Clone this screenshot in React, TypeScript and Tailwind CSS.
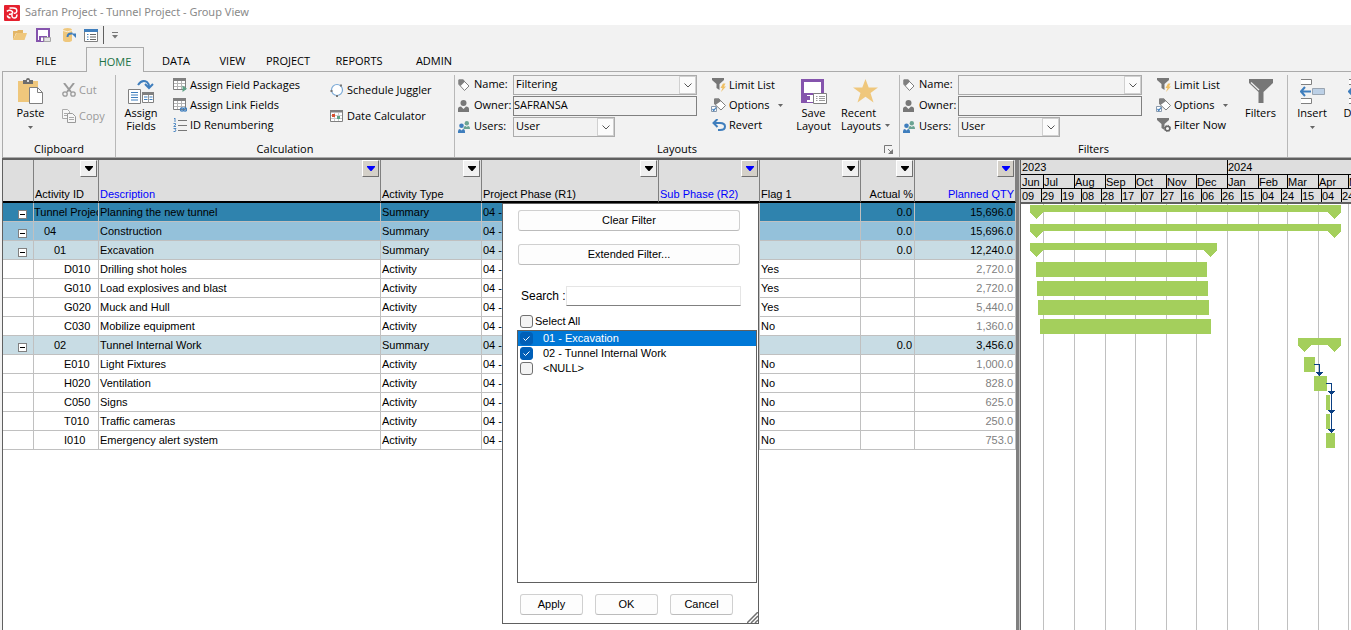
import type { ReactNode } from 'react';

const TABS = [
  { label: 'FILE', width: 'w-20' },
  { label: 'HOME', width: 'w-[58px]' },
  { label: 'DATA', width: 'w-16' },
  { label: 'VIEW', width: 'w-[49px]' },
  { label: 'PROJECT', width: 'w-[62px]' },
  { label: 'REPORTS', width: 'w-20' },
  { label: 'ADMIN', width: 'w-[70px]' },
];

const COLUMNS = [
  { title: '', width: 'w-[31px]' },
  { title: 'Activity ID', width: 'w-[65px]' },
  { title: 'Description', width: 'w-[282px]', filtered: true },
  { title: 'Activity Type', width: 'w-[101px]' },
  { title: 'Project Phase (R1)', width: 'w-[177px]' },
  { title: 'Sub Phase (R2)', width: 'w-[101px]', filtered: true },
  { title: 'Flag 1', width: 'w-[101px]' },
  { title: 'Actual %', width: 'w-[54px]', right: true },
  { title: 'Planned QTY', width: 'w-[101px]', filtered: true, right: true },
];

// start / end are days from the left edge of the timeline, one pixel per day
const ROWS = [
  { level: 0, id: 'Tunnel Project', name: 'Planning the new tunnel', qty: '15,696.0', start: 9, end: 320 },
  { level: 1, id: '04', name: 'Construction', qty: '15,696.0', start: 9, end: 320 },
  { level: 2, id: '01', name: 'Excavation', qty: '12,240.0', start: 9, end: 196 },
  { level: 3, id: 'D010', name: 'Drilling shot holes', flag: 'Yes', qty: '2,720.0', start: 15, end: 186 },
  { level: 3, id: 'G010', name: 'Load explosives and blast', flag: 'Yes', qty: '2,720.0', start: 16, end: 187 },
  { level: 3, id: 'G020', name: 'Muck and Hull', flag: 'Yes', qty: '5,440.0', start: 17, end: 188 },
  { level: 3, id: 'C030', name: 'Mobilize equipment', flag: 'No', qty: '1,360.0', start: 19, end: 190 },
  { level: 2, id: '02', name: 'Tunnel Internal Work', qty: '3,456.0', start: 277, end: 320 },
  { level: 3, id: 'E010', name: 'Light Fixtures', flag: 'No', qty: '1,000.0', start: 283, end: 294 },
  { level: 3, id: 'H020', name: 'Ventilation', flag: 'No', qty: '828.0', start: 293, end: 306 },
  { level: 3, id: 'C050', name: 'Signs', flag: 'No', qty: '625.0', start: 305, end: 309 },
  { level: 3, id: 'T010', name: 'Traffic cameras', flag: 'No', qty: '250.0', start: 305, end: 309 },
  { level: 3, id: 'I010', name: 'Emergency alert system', flag: 'No', qty: '753.0', start: 305, end: 314 },
];

const LEVEL_BG = ['bg-[#2f83ae]', 'bg-[#94c1da]', 'bg-[#c8dce4]', 'bg-white'];
const LEVEL_INDENT = ['pl-0', 'pl-[10px]', 'pl-5', 'pl-[30px]'];

const MONTHS = [
  { name: 'Jun', days: 22 },
  { name: 'Jul', days: 31 },
  { name: 'Aug', days: 31 },
  { name: 'Sep', days: 30 },
  { name: 'Oct', days: 31 },
  { name: 'Nov', days: 30 },
  { name: 'Dec', days: 31 },
  { name: 'Jan', days: 31 },
  { name: 'Feb', days: 29 },
  { name: 'Mar', days: 31 },
  { name: 'Apr', days: 30 },
  { name: 'M', days: 31 },
];
const DATES = ['09', '29', '19', '08', '28', '17', '07', '27', '16', '06', '26', '15', '04', '24', '15', '04', '24'];

/* ---------- icons ---------- */

function Svg({ w, h = w, children }: { w: number; h?: number; children: ReactNode }) {
  return (
    <svg width={w} height={h} viewBox={`0 0 ${w} ${h}`} fill="none" aria-hidden="true" className="shrink-0">
      {children}
    </svg>
  );
}

function LogoIcon() {
  return (
    <Svg w={16}>
      <rect width="16" height="16" rx="1" fill="#e5202e" />
      <path d="M5.500 3H9q3.800 0 3.800 2.700T9.800 8.300" stroke="#fff" strokeWidth="1.500" />
      <path d="M2.800 6.300Q5.500 4.500 7.500 5.800t.5 2.700-3 .5" stroke="#fff" strokeWidth="1.500" />
      <path d="M3.300 10.500Q4 13 6.500 12.800M8 9q-.5 4 2.200 4T13 9.500" stroke="#fff" strokeWidth="1.500" />
    </Svg>
  );
}

function FolderIcon() {
  return (
    <Svg w={14} h={12}>
      <path d="M0 11V2h4l1-1h5v3H3z" fill="#e3b565" />
      <path d="M3.500 4H14l-2.500 7H0z" fill="#efc77c" />
    </Svg>
  );
}

function DiskIcon() {
  return (
    <Svg w={15} h={14}>
      <path d="M1 1h12v12H1z" fill="#fff" stroke="#8554ad" strokeWidth="2" />
      <path d="M3 8h8v5H3z" fill="#8554ad" />
      <path d="M5 9.500h2V13H5z" fill="#fff" />
      <path d="M8 9.500h6.500v4H8z" fill="#e4e4e4" stroke="#a6a6a6" />
    </Svg>
  );
}

function DatabaseIcon() {
  return (
    <Svg w={13} h={14}>
      <path d="M0 2q0-2 4.500-2T9 2v10q0 2-4.500 2T0 12z" fill="#efc77c" />
      <path d="M0 2.500q4.500 2.500 9 0" stroke="#fff" strokeWidth=".7" />
      <path d="M4.500 9q0-4 5-3.500" stroke="#3f7ebd" strokeWidth="2" />
      <path d="M8.500 5.500H13v4.500z" fill="#3f7ebd" />
    </Svg>
  );
}

function ListIcon() {
  return (
    <Svg w={14} h={13}>
      <path d="M.5.5h13v12H.5z" fill="#fff" stroke="#808080" />
      <path d="M0 0h14v3H0z" fill="#3f7ebd" />
      <path d="M3 5.500h1.500M3 8h1.500M3 10.500h1.500" stroke="#3f7ebd" />
      <path d="M6 5.500h6M6 8h6M6 10.500h6" stroke="#666" />
    </Svg>
  );
}

function PasteIcon() {
  return (
    <Svg w={26}>
      <path d="M0 3h20v21H0z" fill="#efc77c" />
      <path d="M5 2h3q0-2 2-2t2 2h3v4H5z" fill="#6d6d6d" />
      <path d="M9 2h2v2H9z" fill="#ddd" />
      <path d="M11.500 9.500h8l5 5v11h-13z" fill="#fff" stroke="#808080" />
      <path d="M19.500 9.500v5h5" stroke="#808080" />
    </Svg>
  );
}

function CutIcon() {
  return (
    <Svg w={14}>
      <path d="M2 0l7 9M12 0L5 9" stroke="#9a9a9a" strokeWidth="2" />
      <circle cx="3" cy="11" r="2.200" stroke="#9a9a9a" strokeWidth="1.300" />
      <circle cx="11" cy="11" r="2.200" stroke="#9a9a9a" strokeWidth="1.300" />
    </Svg>
  );
}

function CopyIcon() {
  return (
    <Svg w={14}>
      <path d="M.5.5h5l2 2v7h-7z" fill="#f7f7f7" stroke="#aaa" />
      <path d="M2 4.500h3M2 6.500h3" stroke="#aaa" />
      <path d="M5.500 4.500h5l3 3v6h-8z" fill="#f7f7f7" stroke="#9a9a9a" />
      <path d="M7 8.500h5M7 10.500h5" stroke="#aaa" />
    </Svg>
  );
}

function AssignFieldsIcon() {
  return (
    <Svg w={26} h={25}>
      <path d="M10 6Q14 0 19 3q2 1.500 2 5" stroke="#3f7ebd" strokeWidth="2" />
      <path d="M17 5L21 9l4-4" stroke="#3f7ebd" strokeWidth="2" />
      <path d="M.5 10.500h12v14H.5z" fill="#fff" stroke="#808080" />
      <path d="M3 13.500h7M3 16h7M3 18.500h7M3 21h7" stroke="#3f7ebd" />
      <path d="M14.500 14.500h11v9h-11z" fill="#fff" stroke="#808080" />
      <path d="M14 13h12v3H14z" fill="#808080" />
      <path d="M16 18h3.500M21.500 18h3M16 20.500h3.500M21.500 20.500h3" stroke="#3f7ebd" />
      <path d="M20.500 16v8" stroke="#999" />
    </Svg>
  );
}

function GridIcon({ link }: { link?: boolean }) {
  return (
    <Svg w={14}>
      <path d="M.5.5h12v11H.5z" fill="#fff" stroke="#808080" />
      <path d="M0 0h13v3H0z" fill="#808080" />
      <path d="M1 5.500h11M1 8.500h11M4.500 3v8M8.500 3v8" stroke="#b5b5b5" />
      {link ? (
        <>
          <circle cx="9" cy="11.500" r="1.600" stroke="#3f7ebd" strokeWidth="1.300" />
          <circle cx="12" cy="11.500" r="1.600" stroke="#3f7ebd" strokeWidth="1.300" />
        </>
      ) : (
        <path d="M9.500 7.500l4.500 3.200-4.500 3.300z" fill="#5fa286" />
      )}
    </Svg>
  );
}

function NumberedIcon() {
  return (
    <Svg w={14}>
      <path d="M5 2.500h9M5 7.500h9M5 12.500h9" stroke="#777" />
      <path d="M1 1l1-1v4M.5 5.500h2v1.500L.7 8.500H3M.5 10.500H3l-1 1.300 1 .7-.7 1H.5" stroke="#3f7ebd" strokeWidth=".9" />
    </Svg>
  );
}

function JugglerIcon() {
  return (
    <Svg w={14}>
      <circle cx="7" cy="7" r="5.500" fill="#fff" stroke="#7aa9d6" strokeWidth="1.200" />
      <path d="M10 1.500h2v2h-2zM.5 7h2v2h-2zM6 12h2v2H6z" fill="#777" />
    </Svg>
  );
}

function CalendarIcon() {
  return (
    <Svg w={13} h={12}>
      <path d="M.5.5h12v11H.5z" fill="#fff" stroke="#808080" />
      <path d="M0 0h13v2.500H0z" fill="#808080" />
      <path d="M1 5.500h11M1 8.500h11M4.500 3v8M8.500 3v8" stroke="#ccc" />
      <path d="M2 4h3v3H2z" fill="#d9502e" />
      <path d="M7 6h3v3H7z" fill="#5fa286" />
    </Svg>
  );
}

function TagIcon() {
  return (
    <Svg w={12}>
      <path d="M1 1h4l6 6-4.500 4.500L1 5.500z" fill="#fff" stroke="#808080" />
      <path d="M.5.500h5L7 2.500 2.500 7 .5 5z" fill="#808080" />
    </Svg>
  );
}

function PersonIcon() {
  return (
    <Svg w={11} h={12}>
      <circle cx="5.500" cy="3" r="3" fill="#777" />
      <path d="M0 12V9q0-2.500 3-2.500L5.500 9 8 6.500q3 0 3 2.500v3z" fill="#777" />
    </Svg>
  );
}

function PeopleIcon() {
  return (
    <Svg w={12}>
      <circle cx="8.800" cy="2.200" r="2.200" fill="#6ba493" />
      <path d="M5.500 8q0-3 2-3l1.300 1 1.200-1q2 0 2 3z" fill="#6ba493" />
      <circle cx="3.500" cy="4.700" r="2.300" fill="#3f7ebd" />
      <path d="M0 12q-.3-4 2-4l1.500 1.500L5 8q2.300 0 2 4z" fill="#3f7ebd" />
    </Svg>
  );
}

function FunnelIcon({ badge }: { badge: 'bolt' | 'gear' }) {
  return (
    <Svg w={14}>
      <path d="M0 0h12v2L7.500 6v6L4.500 10V6L0 2z" fill="#777" />
      {badge === 'bolt' ? (
        <path d="M11 5.500L8.500 10h2L9 14l5-5.500h-2L13.500 5.500z" fill="#efc066" />
      ) : (
        <>
          <circle cx="10.500" cy="10.500" r="2.300" fill="#f3f3f3" stroke="#666" strokeWidth="1.500" />
          <circle cx="10.500" cy="10.500" r="3.200" stroke="#666" strokeWidth="1" strokeDasharray="1.200 1.300" />
        </>
      )}
    </Svg>
  );
}

function OptionsIcon() {
  return (
    <Svg w={15} h={14}>
      <path d="M4 1h4l6.500 6.500L10 12 4 6.500z" fill="#fff" stroke="#808080" />
      <path d="M3 .5h5L10 3 4.500 7 3 5.500z" fill="#808080" />
      <path d="M.5 8.500h5v5h-5z" fill="#fff" stroke="#8a9aad" />
      <path d="M1.500 11l1.300 1.500L5 9.500" stroke="#3f7ebd" strokeWidth="1.200" />
    </Svg>
  );
}

function RevertIcon() {
  return (
    <Svg w={14} h={12}>
      <path d="M5.500 0L1.500 4l4 4M2 4h6q5 0 5 3.500T8 11H6" stroke="#3f7ebd" strokeWidth="2" />
    </Svg>
  );
}

function SaveLayoutIcon() {
  return (
    <Svg w={26} h={25}>
      <path d="M1.500 1.500h20v21h-20z" fill="#fff" stroke="#8554ad" strokeWidth="3" />
      <path d="M3 14h18v9H3z" fill="#8554ad" />
      <path d="M6 16h6v7H6z" fill="#fff" />
      <path d="M6 17h3v4H6z" fill="#8554ad" />
      <path d="M12.500 14.500h13v10h-13z" fill="#fff" stroke="#808080" />
      <path d="M15 17.500h1.500M15 19.500h1.500M15 21.500h1.500M18 17.500h6M18 19.500h6M18 21.500h6" stroke="#999" />
    </Svg>
  );
}

function StarIcon() {
  return (
    <Svg w={25} h={24}>
      <path d="M12.500 0l3.200 8.500H25l-7.500 5.500 3 9.500-8-5.700-8 5.700 3-9.500L0 8.500h9.300z" fill="#efc77c" />
    </Svg>
  );
}

function BigFunnelIcon() {
  return (
    <Svg w={24}>
      <path d="M0 0h24v4l-9.500 9v11h-5V13L0 4z" fill="#777" />
      <path d="M2 3.500l8 7.500" stroke="#f2f2f2" strokeWidth="1.200" />
    </Svg>
  );
}

function InsertIcon() {
  return (
    <Svg w={25}>
      <path d="M1 .5h10.500v5H1M1 19.500h10.500v5H1" fill="#fff" stroke="#808080" />
      <path d="M12.500 9.500h12v6h-12z" fill="#bcd0e6" stroke="#9aa5b1" />
      <path d="M5 8l-4 4.500L5 17M1.500 12.500H11" stroke="#3f7ebd" strokeWidth="2" />
    </Svg>
  );
}

function DownArrow() {
  return (
    <Svg w={5} h={3}>
      <path d="M0 0h5L2.500 3z" fill="#666" />
    </Svg>
  );
}

/* ---------- ribbon ---------- */

function SmallButton({ icon, label, menu, disabled }: { icon: ReactNode; label: string; menu?: boolean; disabled?: boolean }) {
  return (
    <button type="button" disabled={disabled} className="flex h-5 items-center gap-[3px] whitespace-nowrap disabled:text-[#9a9a9a]">
      <span className="flex w-[15px] justify-center">{icon}</span>
      {label}
      {menu && (
        <span className="ml-[5px]">
          <DownArrow />
        </span>
      )}
    </button>
  );
}

function LargeButton({ icon, label, width, menu }: { icon: ReactNode; label: string; width: string; menu?: boolean }) {
  return (
    <button type="button" className={`flex shrink-0 flex-col items-center pt-[3px] ${width}`}>
      <span className="flex h-[26px] items-center">{icon}</span>
      <span className="mt-[2px] whitespace-pre-line leading-[13px]">{label}</span>
      {menu && (
        <span className="mt-[7px] flex">
          <DownArrow />
        </span>
      )}
    </button>
  );
}

function RibbonGroup({ title, width, children, launcher }: { title: string; width: string; children: ReactNode; launcher?: boolean }) {
  return (
    <section aria-label={title} className={`flex shrink-0 flex-col border-r border-[#b8b8b8] ${width}`}>
      <div className="flex h-[66px]">{children}</div>
      <div className="relative text-center leading-4">
        {title}
        {launcher && (
          <button type="button" aria-label="More" className="absolute right-1.5 top-1">
            <Svg w={9}>
              <path d="M.5 8V.5H8M4 4l3 3" stroke="#777" />
              <path d="M9 4v5H4z" fill="#777" />
            </Svg>
          </button>
        )}
      </div>
    </section>
  );
}

function Select({ id, value, className }: { id: string; value: string; className: string }) {
  return (
    <span className={`relative flex h-5 border border-[#ababab] ${className}`}>
      <select id={id} className="w-full appearance-none bg-transparent pb-[2px] pl-[2px] leading-4 outline-none">
        <option>{value}</option>
      </select>
      <span className="pointer-events-none absolute bottom-0 right-0 flex h-[18px] w-[17px] items-center justify-center border border-[#d0d0d0] bg-[#fbfbfb]">
        <Svg w={8} h={5}>
          <path d="M.5.5L4 4 7.500.5" stroke="#555" />
        </Svg>
      </span>
    </span>
  );
}

function OwnerFields({ prefix, name, owner }: { prefix: string; name: string; owner: string }) {
  return (
    <div className="grid w-[242px] shrink-0 grid-cols-[16px_39px_1fr] content-start items-center gap-y-px pl-[3px]">
      <TagIcon />
      <label htmlFor={`${prefix}-name`} className="pb-[2px]">Name:</label>
      <Select id={`${prefix}-name`} value={name} className="w-[184px]" />
      <PersonIcon />
      <label htmlFor={`${prefix}-owner`} className="pb-[2px]">Owner:</label>
      <input id={`${prefix}-owner`} defaultValue={owner} className="h-5 w-[184px] border border-[#808080] bg-transparent pb-[3px] leading-4 outline-none" />
      <PeopleIcon />
      <label htmlFor={`${prefix}-users`} className="pb-[2px]">Users:</label>
      <Select id={`${prefix}-users`} value="User" className="w-[102px]" />
    </div>
  );
}

function Ribbon() {
  return (
    <div className="flex h-[85px] overflow-hidden border-l border-[#ababab] pt-[3px]">
      <RibbonGroup title="Clipboard" width="w-[113px]">
        <LargeButton icon={<PasteIcon />} label="Paste" width="w-[55px]" menu />
        <div className="flex flex-col gap-1.5 pl-[3px] pt-[5px]">
          <SmallButton icon={<CutIcon />} label="Cut" disabled />
          <SmallButton icon={<CopyIcon />} label="Copy" disabled />
        </div>
      </RibbonGroup>
      <RibbonGroup title="Calculation" width="w-[339px]">
        <LargeButton icon={<AssignFieldsIcon />} label={'Assign\nFields'} width="w-[50px]" />
        <div className="flex w-[157px] flex-col pl-1.5">
          <SmallButton icon={<GridIcon />} label="Assign Field Packages" />
          <SmallButton icon={<GridIcon link />} label="Assign Link Fields" />
          <SmallButton icon={<NumberedIcon />} label="ID Renumbering" />
        </div>
        <div className="flex flex-col gap-1.5 pl-1.5 pt-[5px]">
          <SmallButton icon={<JugglerIcon />} label="Schedule Juggler" />
          <SmallButton icon={<CalendarIcon />} label="Date Calculator" />
        </div>
      </RibbonGroup>
      <RibbonGroup title="Layouts" width="w-[445px]" launcher>
        <OwnerFields prefix="layout" name="Filtering" owner="SAFRANSA" />
        <div className="flex w-[94px] flex-col pl-[14px]">
          <SmallButton icon={<FunnelIcon badge="bolt" />} label="Limit List" />
          <SmallButton icon={<OptionsIcon />} label="Options" menu />
          <SmallButton icon={<RevertIcon />} label="Revert" />
        </div>
        <LargeButton icon={<SaveLayoutIcon />} label={'Save\nLayout'} width="w-[45px]" />
        <button type="button" className="flex w-[55px] shrink-0 flex-col pl-[5px] pt-[3px] text-left">
          <span className="flex h-[26px] items-center pl-3">
            <StarIcon />
          </span>
          <span className="mt-[2px] leading-[13px]">Recent</span>
          <span className="flex items-center gap-1 leading-[13px]">
            Layouts <DownArrow />
          </span>
        </button>
      </RibbonGroup>
      <RibbonGroup title="Filters" width="w-[388px]">
        <OwnerFields prefix="filter" name="" owner="" />
        <div className="flex w-[94px] flex-col pl-[14px]">
          <SmallButton icon={<FunnelIcon badge="bolt" />} label="Limit List" />
          <SmallButton icon={<OptionsIcon />} label="Options" menu />
          <SmallButton icon={<FunnelIcon badge="gear" />} label="Filter Now" />
        </div>
        <LargeButton icon={<BigFunnelIcon />} label="Filters" width="w-[53px]" />
      </RibbonGroup>
      <div className="flex">
        <LargeButton icon={<InsertIcon />} label="Insert" width="w-12" menu />
        <LargeButton icon={<InsertIcon />} label="Delete" width="w-12" menu />
      </div>
    </div>
  );
}

/* ---------- activity table ---------- */

function ActivityTable() {
  return (
    <table className="w-[1013px] table-fixed border-separate border-spacing-0">
      <thead>
        <tr className="h-[43px] bg-[#dedede]">
          {COLUMNS.map((col) => (
            <th key={col.width + col.title} className={`border-b-2 border-r border-b-black border-r-[#808080] p-0 font-normal ${col.width}`}>
              {col.title && (
                <div className="flex h-[41px] flex-col justify-between pr-px">
                  <button
                    type="button"
                    aria-label={`Filter ${col.title}`}
                    className={`flex h-[17px] w-[17px] items-center justify-center self-end border border-b-[#707070] border-l-white border-r-[#707070] border-t-white ${col.filtered ? 'bg-[#d4d0c8]' : 'bg-[#f0f0f0]'}`}
                  >
                    <Svg w={8} h={5}>
                      <path d="M0 0h8v1L4.500 5h-1L0 1z" fill={col.filtered ? '#00f' : '#000'} />
                    </Svg>
                  </button>
                  <span className={`whitespace-nowrap pl-px leading-[13px] ${col.right ? 'text-right' : 'text-left'} ${col.filtered ? 'text-[#0000ff]' : ''}`}>
                    {col.title}
                  </span>
                </div>
              )}
            </th>
          ))}
        </tr>
      </thead>
      <tbody className="[&_td]:overflow-hidden [&_td]:whitespace-nowrap [&_td]:border-b [&_td]:border-r [&_td]:border-[#c0c0c0] [&_td]:py-0">
        {ROWS.map((row) => {
          const summary = row.level < 3;
          return (
            <tr key={row.id} className={`h-[19px] leading-[18px] ${LEVEL_BG[row.level]}`}>
              <td className="px-0">
                {summary && (
                  <button type="button" aria-label={`Collapse ${row.name}`} className="ml-[15px] mt-1 flex h-[9px] w-[9px] items-center justify-center border border-[#808080] bg-white">
                    <span className="h-px w-[5px] bg-black" />
                  </button>
                )}
              </td>
              <td className={`pr-0 ${LEVEL_INDENT[row.level]}`}>{row.id}</td>
              <td className="px-px">{row.name}</td>
              <td className="px-px">{summary ? 'Summary' : 'Activity'}</td>
              <td className="px-px">04 -</td>
              <td className="px-px" />
              <td className="px-px">{row.flag}</td>
              <td className="px-[2px] text-right">{summary && '0.0'}</td>
              <td className={`px-[2px] text-right ${summary ? '' : 'text-[#808080]'}`}>{row.qty}</td>
            </tr>
          );
        })}
      </tbody>
    </table>
  );
}

/* ---------- filter popup ---------- */

function CheckItem({ label, checked, selected }: { label: string; checked?: boolean; selected?: boolean }) {
  return (
    <label className={`flex h-[15px] items-center gap-[10px] pl-[2px] ${selected ? 'bg-[#0078d7] text-white' : ''}`}>
      <CheckBox checked={checked} />
      {label}
    </label>
  );
}

function CheckBox({ checked }: { checked?: boolean }) {
  return (
    <span className="relative flex">
      <input
        type="checkbox"
        defaultChecked={checked}
        className="h-[13px] w-[13px] appearance-none rounded-[3px] border border-[#707070] bg-[#f3f3f3] checked:border-[#005fb8] checked:bg-[#005fb8]"
      />
      {checked && (
        <span className="pointer-events-none absolute inset-0 flex items-center justify-center">
          <Svg w={7} h={5}>
            <path d="M.5 2.500l2 2 4-4" stroke="#fff" />
          </Svg>
        </span>
      )}
    </span>
  );
}

const POPUP_BUTTON = 'h-[21px] rounded-[3px] border border-[#d0d0d0] border-b-[#bcbcbc] bg-[#fdfdfd]';

function FilterPopup() {
  return (
    <div role="dialog" aria-label="Column filter" className="absolute left-[499px] top-[43px] flex h-[421px] w-[257px] flex-col border border-[#606060] bg-white pl-[14px] pt-1.5">
      <div className="flex w-[223px] flex-col gap-[13px] self-start pl-px">
        <button type="button" className={POPUP_BUTTON}>Clear Filter</button>
        <button type="button" className={POPUP_BUTTON}>Extended Filter...</button>
      </div>
      <div className="mt-[21px] flex items-center pl-1 text-xs">
        <label htmlFor="search" className="w-[45px] whitespace-nowrap">Search :</label>
        <input id="search" type="search" className="h-5 w-[175px] border border-[#e5e5e5] border-b-[#808080] bg-white px-1 outline-none" />
      </div>
      <label className="mt-[7px] flex h-[17px] items-center gap-[2px] pl-[3px] text-[11px]">
        <CheckBox />
        Select All
      </label>
      <div className="h-[253px] w-60 border border-[#606060]">
        <CheckItem label="01 - Excavation" checked selected />
        <CheckItem label="02 - Tunnel Internal Work" checked />
        <CheckItem label="<NULL>" />
      </div>
      <div className="mt-[11px] flex gap-3 pl-[3px]">
        <button type="button" className={`w-[63px] ${POPUP_BUTTON}`}>Apply</button>
        <button type="button" className={`w-[63px] ${POPUP_BUTTON}`}>OK</button>
        <button type="button" className={`w-[63px] ${POPUP_BUTTON}`}>Cancel</button>
      </div>
      <div className="absolute bottom-0 right-0">
        <Svg w={11}>
          <path d="M0 11L11 0M4 11l7-7M8 11l3-3" stroke="#707070" strokeWidth="1.500" />
        </Svg>
      </div>
    </div>
  );
}

/* ---------- gantt ---------- */

function HeaderCell({ days, text }: { days: number; text: string }) {
  return (
    <div className="shrink-0 overflow-hidden whitespace-nowrap border-r border-black" style={{ width: days }}>
      {text}
    </div>
  );
}

function Gantt() {
  let day = 0;
  const monthLines = MONTHS.map((m) => (day += m.days));
  return (
    <div className="flex min-w-0 flex-1 flex-col overflow-hidden border-l border-[#606060]">
      <div className="h-11 border-b-2 border-[#606060] bg-[#dedede] leading-[14px]">
        <div className="flex h-[15px] overflow-hidden border-b border-black pl-px">
          <HeaderCell days={206} text="2023" />
          <HeaderCell days={366} text="2024" />
        </div>
        <div className="flex h-[14px] overflow-hidden border-b border-black pl-px">
          {MONTHS.map((m) => (
            <HeaderCell key={m.name} days={m.days} text={m.name} />
          ))}
        </div>
        <div className="flex h-[13px] overflow-hidden pl-px">
          {DATES.map((d, i) => (
            <HeaderCell key={i} days={20} text={d} />
          ))}
        </div>
      </div>
      <svg className="w-full flex-1 bg-white" shapeRendering="crispEdges" role="img" aria-label="Gantt chart">
        {monthLines.map((x) => (
          <line key={x} x1={x + 0.5} x2={x + 0.5} y1="0" y2="100%" stroke="#c0c0c0" />
        ))}
        {ROWS.map((row, i) => {
          const y = i * 19 + 1;
          if (row.level === 3) {
            return <rect key={row.id} x={row.start} y={y} width={row.end - row.start} height="15" fill="#a4cf5c" />;
          }
          return (
            <path
              key={row.id}
              d={`M${row.start} ${y}H${row.end}V${y + 7}l-6.500 7l-6.500 -7H${row.start + 13}l-6.500 7l-6.500 -7z`}
              fill="#a4cf5c"
            />
          );
        })}
        <path d="M293 160.500h5.500V170M305 179.500h5.500V227" stroke="#0a3f82" fill="none" />
        <path d="M295 168h7l-3.500 4zM307 187h7l-3.500 4zM307 206h7l-3.500 4zM307 225h7l-3.500 4z" fill="#0a3f82" />
      </svg>
    </div>
  );
}

export default function App() {
  return (
    <div className="flex h-screen flex-col overflow-hidden bg-[#f2f2f2] font-['Open_Sans','Noto_Sans',sans-serif] text-[11px] text-black">
      <header className="flex h-[25px] shrink-0 items-center gap-[5px] bg-white pl-1 font-['Noto_Sans','Open_Sans',sans-serif] text-[#8a8a8a]">
        <LogoIcon />
        Safran Project - Tunnel Project - Group View
      </header>
      <div className="flex h-[22px] shrink-0 items-center pb-[2px] pl-[13px]">
        <button type="button" aria-label="Open" className="mr-[9px]"><FolderIcon /></button>
        <button type="button" aria-label="Save" className="mr-3"><DiskIcon /></button>
        <button type="button" aria-label="Update" className="mr-2"><DatabaseIcon /></button>
        <button type="button" aria-label="List" className="mr-[5px]"><ListIcon /></button>
        <div className="mr-2 h-[18px] w-px bg-[#606060]" />
        <button type="button" aria-label="Customize">
          <Svg w={6} h={7}>
            <path d="M0 .5h6" stroke="#777" />
            <path d="M0 3h6L3 6.500z" fill="#777" />
          </Svg>
        </button>
      </div>
      <nav className="ml-[2px] flex h-[25px] shrink-0 border-b border-[#ababab] pl-1 text-[11px]">
        {TABS.map((tab) => (
          <button
            key={tab.label}
            type="button"
            className={`h-[25px] pt-1 ${tab.width} ${tab.label === 'HOME' ? 'border border-b-0 border-[#ababab] bg-[#f2f2f2] text-[#217346]' : ''}`}
          >
            {tab.label}
          </button>
        ))}
      </nav>
      <div className="ml-[2px] shrink-0 border-b border-[#ababab]">
        <Ribbon />
      </div>
      <main className="ml-[2px] flex min-h-0 flex-1 border-l border-t-2 border-[#606060] bg-white font-['Liberation_Sans',Arial,sans-serif]">
        <div className="relative shrink-0">
          <ActivityTable />
          <FilterPopup />
        </div>
        <div className="w-1 shrink-0 border-r border-[#c0c0c0] bg-[#808080]" />
        <Gantt />
      </main>
    </div>
  );
}
